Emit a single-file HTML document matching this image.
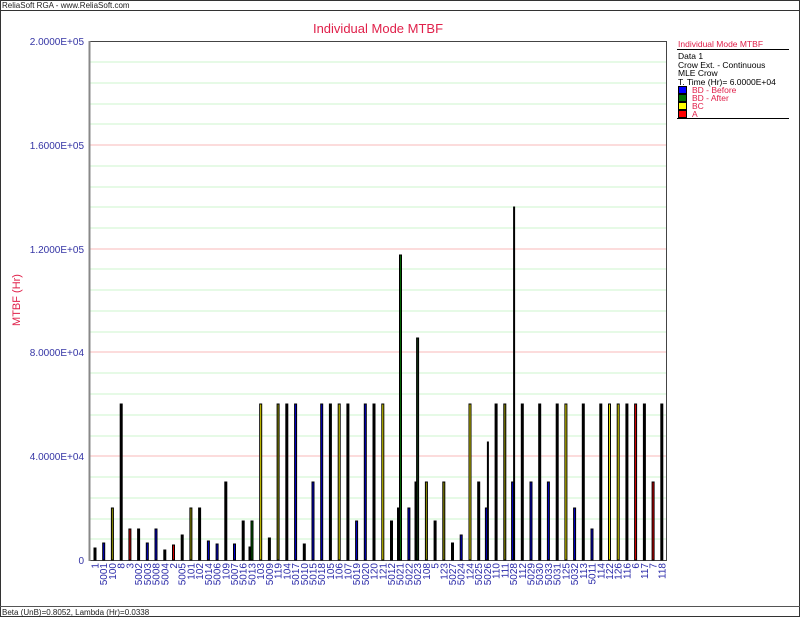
<!DOCTYPE html>
<html><head><meta charset="utf-8"><style>
html,body{margin:0;padding:0;background:#fff;}
svg{display:block;font-family:"Liberation Sans","DejaVu Sans",sans-serif;}
</style></head><body>
<svg width="800" height="617" viewBox="0 0 800 617" xmlns="http://www.w3.org/2000/svg">
<rect x="0.5" y="0.5" width="799" height="616" fill="#fff" stroke="#333"/>
<text x="2" y="8" font-size="8" fill="#222">ReliaSoft RGA - www.ReliaSoft.com</text>
<line x1="0" y1="10.5" x2="800" y2="10.5" stroke="#333"/>
<line x1="0" y1="606.5" x2="800" y2="606.5" stroke="#555"/>
<text x="2" y="615" font-size="8" fill="#222">Beta (UnB)=0.8052, Lambda (Hr)=0.0338</text>

<text x="378" y="33" font-size="13" fill="#e0204a" text-anchor="middle">Individual Mode MTBF</text>
<text transform="translate(20,300) rotate(-90)" font-size="11" fill="#e0204a" text-anchor="middle">MTBF (Hr)</text>

<g fill="#3535a5" font-size="10" text-anchor="end">
<text x="84" y="45">2.0000E+05</text>
<text x="84" y="149">1.6000E+05</text>
<text x="84" y="253">1.2000E+05</text>
<text x="84" y="356">8.0000E+04</text>
<text x="84" y="460">4.0000E+04</text>
<text x="84" y="564">0</text>
</g>

<g stroke="#ccf5cc" stroke-width="1">
<line x1="90" x2="666" y1="62" y2="62"/><line x1="90" x2="666" y1="83" y2="83"/><line x1="90" x2="666" y1="104" y2="104"/><line x1="90" x2="666" y1="124" y2="124"/>
<line x1="90" x2="666" y1="166" y2="166"/><line x1="90" x2="666" y1="187" y2="187"/><line x1="90" x2="666" y1="207" y2="207"/><line x1="90" x2="666" y1="228" y2="228"/>
<line x1="90" x2="666" y1="269" y2="269"/><line x1="90" x2="666" y1="290" y2="290"/><line x1="90" x2="666" y1="311" y2="311"/><line x1="90" x2="666" y1="332" y2="332"/>
<line x1="90" x2="666" y1="373" y2="373"/><line x1="90" x2="666" y1="394" y2="394"/><line x1="90" x2="666" y1="415" y2="415"/><line x1="90" x2="666" y1="436" y2="436"/>
<line x1="90" x2="666" y1="477" y2="477"/><line x1="90" x2="666" y1="498" y2="498"/><line x1="90" x2="666" y1="519" y2="519"/><line x1="90" x2="666" y1="539" y2="539"/>
</g>
<g stroke="#f8b8b8" stroke-width="1">
<line x1="90" x2="666" y1="145" y2="145"/><line x1="90" x2="666" y1="249" y2="249"/><line x1="90" x2="666" y1="352" y2="352"/><line x1="90" x2="666" y1="456" y2="456"/>
</g>
<rect x="89.5" y="41.5" width="577" height="519" fill="none" stroke="#444"/>
<line x1="89.5" y1="41" x2="89.5" y2="561" stroke="#888" stroke-width="2"/>

<g stroke="#000" stroke-width="1">
<rect x="94" y="548" width="2" height="12" fill="#000"/>
<rect x="102.7" y="543" width="2" height="17" fill="#0000d0"/>
<rect x="111.4" y="508" width="2" height="52" fill="#909000"/>
<rect x="120.2" y="404" width="2" height="156" fill="#000"/>
<rect x="128.9" y="529" width="2" height="31" fill="#d00000"/>
<rect x="137.6" y="529" width="2" height="31" fill="#000"/>
<rect x="146.3" y="543" width="2" height="17" fill="#0000d0"/>
<rect x="155" y="529" width="2" height="31" fill="#0000d0"/>
<rect x="163.8" y="550" width="2" height="10" fill="#000"/>
<rect x="172.5" y="545" width="2" height="15" fill="#d00000"/>
<rect x="181.2" y="535" width="2" height="25" fill="#000"/>
<rect x="189.9" y="508" width="2" height="52" fill="#909000"/>
<rect x="198.6" y="508" width="2" height="52" fill="#000"/>
<rect x="207.4" y="541" width="2" height="19" fill="#0000d0"/>
<rect x="216.1" y="544" width="2" height="16" fill="#0000d0"/>
<rect x="224.8" y="482" width="2" height="78" fill="#000"/>
<rect x="233.5" y="544" width="2" height="16" fill="#0000d0"/>
<rect x="242.2" y="521" width="2" height="39" fill="#000"/>
<rect x="249" y="547" width="1" height="13" fill="#000"/>
<rect x="251" y="521" width="2" height="39" fill="#006000"/>
<rect x="259.7" y="404" width="2" height="156" fill="#e8e000"/>
<rect x="268.4" y="538" width="2" height="22" fill="#000"/>
<rect x="277.1" y="404" width="2" height="156" fill="#909000"/>
<rect x="285.8" y="404" width="2" height="156" fill="#000"/>
<rect x="294.6" y="404" width="2" height="156" fill="#0000d0"/>
<rect x="303.3" y="544" width="2" height="16" fill="#000"/>
<rect x="312" y="482" width="2" height="78" fill="#0000d0"/>
<rect x="320.7" y="404" width="2" height="156" fill="#0000d0"/>
<rect x="329.4" y="404" width="2" height="156" fill="#000"/>
<rect x="338.2" y="404" width="2" height="156" fill="#e8e000"/>
<rect x="346.9" y="404" width="2" height="156" fill="#000"/>
<rect x="355.6" y="521" width="2" height="39" fill="#0000d0"/>
<rect x="364.3" y="404" width="2" height="156" fill="#0000d0"/>
<rect x="373" y="404" width="2" height="156" fill="#000"/>
<rect x="381.8" y="404" width="2" height="156" fill="#e8e000"/>
<rect x="390.5" y="521" width="2" height="39" fill="#000"/>
<rect x="397.5" y="508" width="1" height="52" fill="#000"/>
<rect x="399.5" y="255" width="2" height="305" fill="#006000"/>
<rect x="407.9" y="508" width="2" height="52" fill="#0000d0"/>
<rect x="415" y="482" width="1" height="78" fill="#000"/>
<rect x="416.6" y="338" width="2" height="222" fill="#103010"/>
<rect x="425.4" y="482" width="2" height="78" fill="#909000"/>
<rect x="434.1" y="521" width="2" height="39" fill="#000"/>
<rect x="442.8" y="482" width="2" height="78" fill="#909000"/>
<rect x="451.5" y="543" width="2" height="17" fill="#000"/>
<rect x="460.2" y="535" width="2" height="25" fill="#0000d0"/>
<rect x="469" y="404" width="2" height="156" fill="#e8e000"/>
<rect x="477.7" y="482" width="2" height="78" fill="#000"/>
<rect x="485.4" y="508" width="2" height="52" fill="#0000d0"/>
<rect x="487.4" y="442" width="1" height="118" fill="#006000"/>
<rect x="495.1" y="404" width="2" height="156" fill="#000"/>
<rect x="503.8" y="404" width="2" height="156" fill="#909000"/>
<rect x="511.6" y="482" width="2" height="78" fill="#0000d0"/>
<rect x="513.6" y="207" width="1" height="353" fill="#000"/>
<rect x="521.3" y="404" width="2" height="156" fill="#000"/>
<rect x="530" y="482" width="2" height="78" fill="#0000d0"/>
<rect x="538.7" y="404" width="2" height="156" fill="#000"/>
<rect x="547.4" y="482" width="2" height="78" fill="#0000d0"/>
<rect x="556.2" y="404" width="2" height="156" fill="#000"/>
<rect x="564.9" y="404" width="2" height="156" fill="#e8e000"/>
<rect x="573.6" y="508" width="2" height="52" fill="#0000d0"/>
<rect x="582.3" y="404" width="2" height="156" fill="#000"/>
<rect x="591" y="529" width="2" height="31" fill="#0000d0"/>
<rect x="599.8" y="404" width="2" height="156" fill="#000"/>
<rect x="608.5" y="404" width="2" height="156" fill="#e8e000"/>
<rect x="617.2" y="404" width="2" height="156" fill="#e8e000"/>
<rect x="625.9" y="404" width="2" height="156" fill="#000"/>
<rect x="634.6" y="404" width="2" height="156" fill="#e00000"/>
<rect x="643.4" y="404" width="2" height="156" fill="#000"/>
<rect x="652.1" y="482" width="2" height="78" fill="#d00000"/>
<rect x="660.8" y="404" width="2" height="156" fill="#000"/>
</g>

<g fill="#2828a8" font-size="10" text-anchor="end">
<text transform="translate(98.5,563) rotate(-90)">1</text>
<text transform="translate(107.2,563) rotate(-90)">5001</text>
<text transform="translate(115.9,563) rotate(-90)">100</text>
<text transform="translate(124.7,563) rotate(-90)">8</text>
<text transform="translate(133.4,563) rotate(-90)">3</text>
<text transform="translate(142.1,563) rotate(-90)">5002</text>
<text transform="translate(150.8,563) rotate(-90)">5003</text>
<text transform="translate(159.5,563) rotate(-90)">5008</text>
<text transform="translate(168.3,563) rotate(-90)">5004</text>
<text transform="translate(177,563) rotate(-90)">2</text>
<text transform="translate(185.7,563) rotate(-90)">5005</text>
<text transform="translate(194.4,563) rotate(-90)">101</text>
<text transform="translate(203.1,563) rotate(-90)">102</text>
<text transform="translate(211.9,563) rotate(-90)">5014</text>
<text transform="translate(220.6,563) rotate(-90)">5006</text>
<text transform="translate(229.3,563) rotate(-90)">109</text>
<text transform="translate(238,563) rotate(-90)">5007</text>
<text transform="translate(246.7,563) rotate(-90)">5016</text>
<text transform="translate(255.5,563) rotate(-90)">5013</text>
<text transform="translate(264.2,563) rotate(-90)">103</text>
<text transform="translate(272.9,563) rotate(-90)">5009</text>
<text transform="translate(281.6,563) rotate(-90)">119</text>
<text transform="translate(290.3,563) rotate(-90)">104</text>
<text transform="translate(299.1,563) rotate(-90)">5017</text>
<text transform="translate(307.8,563) rotate(-90)">5010</text>
<text transform="translate(316.5,563) rotate(-90)">5015</text>
<text transform="translate(325.2,563) rotate(-90)">5018</text>
<text transform="translate(333.9,563) rotate(-90)">105</text>
<text transform="translate(342.7,563) rotate(-90)">106</text>
<text transform="translate(351.4,563) rotate(-90)">107</text>
<text transform="translate(360.1,563) rotate(-90)">5019</text>
<text transform="translate(368.8,563) rotate(-90)">5020</text>
<text transform="translate(377.5,563) rotate(-90)">120</text>
<text transform="translate(386.3,563) rotate(-90)">121</text>
<text transform="translate(395,563) rotate(-90)">5012</text>
<text transform="translate(403.7,563) rotate(-90)">5021</text>
<text transform="translate(412.4,563) rotate(-90)">5022</text>
<text transform="translate(421.1,563) rotate(-90)">5023</text>
<text transform="translate(429.9,563) rotate(-90)">108</text>
<text transform="translate(438.6,563) rotate(-90)">5</text>
<text transform="translate(447.3,563) rotate(-90)">123</text>
<text transform="translate(456,563) rotate(-90)">5027</text>
<text transform="translate(464.7,563) rotate(-90)">5024</text>
<text transform="translate(473.5,563) rotate(-90)">124</text>
<text transform="translate(482.2,563) rotate(-90)">5025</text>
<text transform="translate(490.9,563) rotate(-90)">5026</text>
<text transform="translate(499.6,563) rotate(-90)">110</text>
<text transform="translate(508.3,563) rotate(-90)">111</text>
<text transform="translate(517.1,563) rotate(-90)">5028</text>
<text transform="translate(525.8,563) rotate(-90)">112</text>
<text transform="translate(534.5,563) rotate(-90)">5029</text>
<text transform="translate(543.2,563) rotate(-90)">5030</text>
<text transform="translate(551.9,563) rotate(-90)">5033</text>
<text transform="translate(560.7,563) rotate(-90)">5031</text>
<text transform="translate(569.4,563) rotate(-90)">125</text>
<text transform="translate(578.1,563) rotate(-90)">5032</text>
<text transform="translate(586.8,563) rotate(-90)">113</text>
<text transform="translate(595.5,563) rotate(-90)">5011</text>
<text transform="translate(604.3,563) rotate(-90)">114</text>
<text transform="translate(613,563) rotate(-90)">122</text>
<text transform="translate(621.7,563) rotate(-90)">126</text>
<text transform="translate(630.4,563) rotate(-90)">116</text>
<text transform="translate(639.1,563) rotate(-90)">6</text>
<text transform="translate(647.9,563) rotate(-90)">117</text>
<text transform="translate(656.6,563) rotate(-90)">7</text>
<text transform="translate(665.3,563) rotate(-90)">118</text>
</g>

<!-- legend -->
<g font-size="8.5">
<text x="678" y="47" fill="#e0204a">Individual Mode MTBF</text>
<line x1="677" y1="49.5" x2="789" y2="49.5" stroke="#000"/>
<text x="678" y="59" fill="#000">Data 1</text>
<text x="678" y="68" fill="#000">Crow Ext. - Continuous</text>
<text x="678" y="76" fill="#000">MLE Crow</text>
<text x="678" y="85" fill="#000">T. Time (Hr)= 6.0000E+04</text>
<rect x="678.5" y="86.5" width="8" height="7" fill="#0000ff" stroke="#000"/>
<text x="692" y="93" fill="#e0204a">BD - Before</text>
<rect x="678.5" y="94.5" width="8" height="7" fill="#007000" stroke="#000"/>
<text x="692" y="101" fill="#e0204a">BD - After</text>
<rect x="678.5" y="102.5" width="8" height="7" fill="#ffff00" stroke="#000"/>
<text x="692" y="109" fill="#e0204a">BC</text>
<rect x="678.5" y="110.5" width="8" height="7" fill="#ff0000" stroke="#000"/>
<text x="692" y="117" fill="#e0204a">A</text>
<line x1="677" y1="118.5" x2="789" y2="118.5" stroke="#000"/>
</g>
</svg>
</body></html>
